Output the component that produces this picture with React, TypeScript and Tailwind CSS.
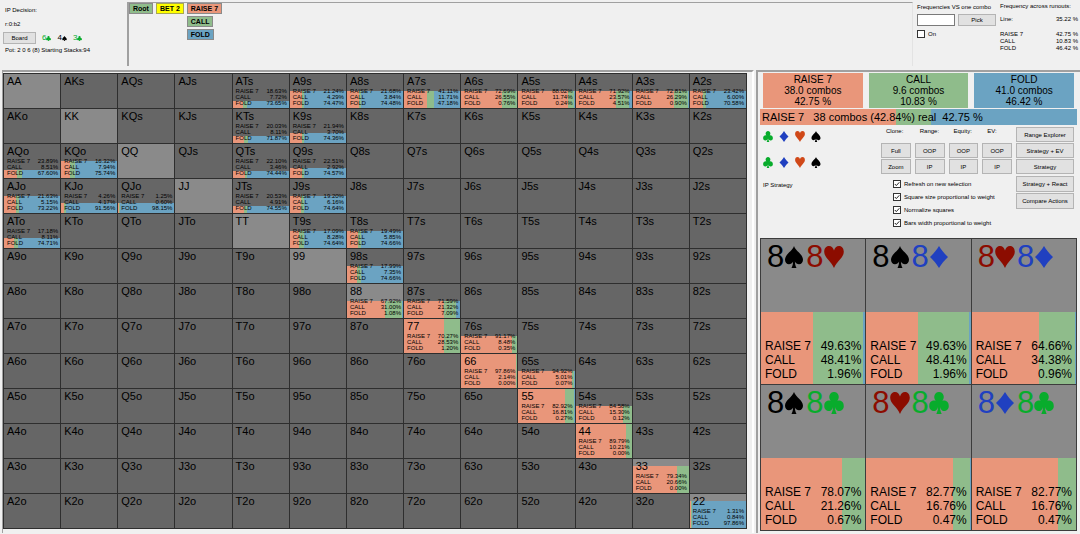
import clsx from 'clsx';

type Suit = 'club' | 'diamond' | 'heart' | 'spade';

type Freq = {
  raise: string;
  call: string;
  fold: string;
  weight: number;
};

const RANKS = ['A', 'K', 'Q', 'J', 'T', '9', '8', '7', '6', '5', '4', '3', '2'];

const HANDS: Record<string, Freq> = {
  ATs: { raise: '18.63', call: '7.72', fold: '73.65', weight: 20 },
  A9s: { raise: '21.24', call: '4.29', fold: '74.47', weight: 50 },
  A8s: { raise: '21.68', call: '3.84', fold: '74.48', weight: 50 },
  A7s: { raise: '41.11', call: '11.71', fold: '47.18', weight: 50 },
  A6s: { raise: '72.69', call: '26.55', fold: '0.76', weight: 50 },
  A5s: { raise: '88.02', call: '11.74', fold: '0.24', weight: 50 },
  A4s: { raise: '71.92', call: '23.57', fold: '4.51', weight: 50 },
  A3s: { raise: '72.81', call: '26.29', fold: '0.90', weight: 50 },
  A2s: { raise: '23.42', call: '6.00', fold: '70.58', weight: 50 },
  KTs: { raise: '20.03', call: '8.11', fold: '71.87', weight: 20 },
  K9s: { raise: '21.94', call: '3.70', fold: '74.36', weight: 30 },
  AQo: { raise: '23.89', call: '8.51', fold: '67.60', weight: 25 },
  KQo: { raise: '16.32', call: '7.94', fold: '75.74', weight: 50 },
  QTs: { raise: '22.10', call: '3.46', fold: '74.44', weight: 20 },
  Q9s: { raise: '22.51', call: '2.92', fold: '74.57', weight: 30 },
  AJo: { raise: '21.63', call: '5.15', fold: '73.22', weight: 50 },
  KJo: { raise: '4.26', call: '4.17', fold: '91.56', weight: 30 },
  QJo: { raise: '1.25', call: '0.60', fold: '98.15', weight: 30 },
  JTs: { raise: '20.53', call: '4.91', fold: '74.55', weight: 20 },
  J9s: { raise: '19.20', call: '6.16', fold: '74.64', weight: 50 },
  ATo: { raise: '17.18', call: '8.11', fold: '74.71', weight: 30 },
  T9s: { raise: '17.09', call: '8.28', fold: '74.64', weight: 50 },
  T8s: { raise: '19.49', call: '5.85', fold: '74.66', weight: 50 },
  '98s': { raise: '17.99', call: '7.35', fold: '74.66', weight: 50 },
  '88': { raise: '67.92', call: '31.00', fold: '1.08', weight: 50 },
  '87s': { raise: '71.59', call: '21.32', fold: '7.09', weight: 50 },
  '77': { raise: '70.27', call: '28.53', fold: '1.20', weight: 100 },
  '76s': { raise: '91.17', call: '8.48', fold: '0.35', weight: 50 },
  '66': { raise: '97.86', call: '2.14', fold: '0.00', weight: 100 },
  '65s': { raise: '94.92', call: '5.01', fold: '0.07', weight: 50 },
  '55': { raise: '82.92', call: '16.81', fold: '0.27', weight: 100 },
  '54s': { raise: '84.58', call: '15.30', fold: '0.12', weight: 50 },
  '44': { raise: '89.79', call: '10.21', fold: '0.00', weight: 100 },
  '33': { raise: '79.34', call: '20.66', fold: '0.00', weight: 80 },
  '22': { raise: '1.31', call: '0.84', fold: '97.86', weight: 80 },
};

const COMBOS: { cards: [Suit, Suit]; freq: Freq }[] = [
  { cards: ['spade', 'heart'], freq: { raise: '49.63', call: '48.41', fold: '1.96', weight: 50 } },
  { cards: ['spade', 'diamond'], freq: { raise: '49.63', call: '48.41', fold: '1.96', weight: 50 } },
  { cards: ['heart', 'diamond'], freq: { raise: '64.66', call: '34.38', fold: '0.96', weight: 50 } },
  { cards: ['spade', 'club'], freq: { raise: '78.07', call: '21.26', fold: '0.67', weight: 50 } },
  { cards: ['heart', 'club'], freq: { raise: '82.77', call: '16.76', fold: '0.47', weight: 50 } },
  { cards: ['diamond', 'club'], freq: { raise: '82.77', call: '16.76', fold: '0.47', weight: 50 } },
];

const SUMMARY = [
  { label: 'RAISE 7', combos: '38.0', pct: '42.75', color: 'bg-[#e9967a]' },
  { label: 'CALL', combos: '9.6', pct: '10.83', color: 'bg-[#8fbc8b]' },
  { label: 'FOLD', combos: '41.0', pct: '46.42', color: 'bg-[#6ba3c2]' },
];

const OPTIONS = [
  'Refresh on new selection',
  'Square size proportional to weight',
  'Normalize squares',
  'Bars width proportional to weight',
];

const SUITS: Suit[] = ['club', 'diamond', 'heart', 'spade'];

const CARD_COLORS: Record<Suit, string> = {
  club: 'text-[#08ac2c]',
  diamond: 'text-[#2040c0]',
  heart: 'text-[#8c0c00]',
  spade: 'text-black',
};

const SUIT_PATHS: Record<Suit, string> = {
  club: 'M10 0a4.600 4.600 0 0 1 3.300 7.900C16.600 7.200 19.700 9 19.700 12.200a4.400 4.400 0 0 1-8.700 1.500c.1 2.600.6 4.400 1.700 6.300H7.300c1.100-1.900 1.600-3.700 1.700-6.300A4.400 4.400 0 0 1 .3 12.200C.3 9 3.400 7.200 6.700 7.900A4.600 4.600 0 0 1 10 0z',
  diamond: 'M10 0C12.500 3.800 15.700 7.300 19 10 15.700 12.700 12.500 16.200 10 20 7.500 16.200 4.300 12.700 1 10 4.300 7.300 7.500 3.800 10 0z',
  heart: 'M10 4.200C10.700 1.500 12.500 0 15 0c3 0 4.800 2.300 4.800 5.300 0 5.200-6.600 8-9.800 14.700C6.800 13.300.2 10.500.2 5.300.2 2.300 2 0 5 0c2.500 0 4.300 1.500 5 4.200z',
  spade: 'M10 0c1.700 4.700 9 7.500 9 12.500 0 2.400-1.700 4.100-4 4.100-1.800 0-3.200-.9-4.100-2.500.1 2.300.6 4.100 1.600 5.900h-5c1-1.800 1.500-3.600 1.600-5.900C8.200 15.700 6.800 16.600 5 16.600c-2.300 0-4-1.700-4-4.100C1 7.500 8.300 4.700 10 0z',
};

function SuitIcon({ suit, className }: { suit: Suit; className?: string }) {
  return (
    <svg
      viewBox="0 0 20 20"
      preserveAspectRatio="none"
      fill="currentColor"
      className={className}
      aria-hidden="true"
    >
      <path d={SUIT_PATHS[suit]} />
    </svg>
  );
}

function handName(row: number, col: number) {
  if (row === col) return RANKS[row] + RANKS[row];
  return row < col ? `${RANKS[row]}${RANKS[col]}s` : `${RANKS[col]}${RANKS[row]}o`;
}

function StrategyFill({ freq }: { freq: Freq }) {
  return (
    <div className="absolute inset-x-0 bottom-0 flex bg-[#6ba3c2]" style={{ height: `${freq.weight}%` }}>
      <div className="bg-[#e9967a]" style={{ width: `${freq.raise}%` }} />
      <div className="bg-[#8fbc8b]" style={{ width: `${freq.call}%` }} />
    </div>
  );
}

function FreqLines({ freq }: { freq: Freq }) {
  return (
    <>
      <div className="flex justify-between whitespace-nowrap"><span>RAISE 7</span><span>{freq.raise}%</span></div>
      <div className="flex justify-between whitespace-nowrap"><span>CALL</span><span>{freq.call}%</span></div>
      <div className="flex justify-between whitespace-nowrap"><span>FOLD</span><span>{freq.fold}%</span></div>
    </>
  );
}

function HandCell({ row, col }: { row: number; col: number }) {
  const name = handName(row, col);
  const freq = HANDS[name];

  return (
    <div
      className={clsx(
        'relative h-[35px] border-r border-b border-[#2e2e2e]',
        row === col ? 'bg-[#8a8a8a]' : 'bg-[#666666]',
      )}
    >
      {freq && <StrategyFill freq={freq} />}
      <div className="relative flex h-full flex-col justify-between pt-px pr-0.5 pb-0.5 pl-[3px]">
        <div className="text-[11px] leading-[12px]">{name}</div>
        {freq && <div className="text-[6px] leading-[6px]"><FreqLines freq={freq} /></div>}
      </div>
    </div>
  );
}

function Button({ children, className }: { children: string; className?: string }) {
  return (
    <button
      type="button"
      className={clsx(
        'border border-[#b4b4b4] bg-[#e1e1e1] text-center leading-[8px] whitespace-nowrap hover:border-[#0078d7]',
        className,
      )}
    >
      {children}
    </button>
  );
}

function Checkbox({ label, checked }: { label: string; checked?: boolean }) {
  return (
    <label className="flex items-center gap-[3px]">
      <span className="relative flex">
        <input
          type="checkbox"
          defaultChecked={checked}
          className="peer size-2 appearance-none border border-[#333333] bg-white"
        />
        <svg
          viewBox="0 0 8 8"
          fill="none"
          stroke="#222222"
          className="pointer-events-none absolute inset-0 hidden size-2 peer-checked:block"
        >
          <path d="M1.800 4l1.500 1.600L6.300 2.300" />
        </svg>
      </span>
      {label}
    </label>
  );
}

function BoardCard({ rank, suit }: { rank: string; suit: Suit }) {
  return (
    <span className={clsx('flex items-center text-[8px] leading-[10px]', CARD_COLORS[suit])}>
      {rank}
      <SuitIcon suit={suit} className="size-[5px]" />
    </span>
  );
}

function Header() {
  return (
    <header className="flex h-[70px] pt-0.5">
      <section className="w-[127px] shrink-0 pt-1 pl-[5px] leading-[8px]">
        <p>IP Decision:</p>
        <p className="mt-[6px]">r:0:b2</p>
        <div className="mt-1 -ml-0.5 flex items-center gap-[6px]">
          <Button className="h-3 w-[33px]">Board</Button>
          <BoardCard rank="6" suit="club" />
          <BoardCard rank="4" suit="spade" />
          <BoardCard rank="3" suit="club" />
        </div>
        <p className="mt-0.5 whitespace-nowrap">Pot: 2 0 6 (8) Starting Stacks:94</p>
      </section>

      <nav className="mb-1 flex flex-1 items-start gap-[3px] border-t border-r border-l-2 border-t-[#a0a0a0] border-r-[#e3e3e3] border-l-[#a0a0a0] text-[7px] leading-[9px] font-bold">
        <button type="button" className="border border-[#8a8a8a] bg-[#8fbc8b] px-[3px]">Root</button>
        <button type="button" className="border border-[#a8a850] bg-[#ffff00] px-[3px]">BET 2</button>
        <div className="flex flex-col items-start gap-0.5">
          <button type="button" className="border border-[#8a8a8a] bg-[#e9967a] px-[3px]">RAISE 7</button>
          <button type="button" className="border border-[#8a8a8a] bg-[#8fbc8b] px-[3px]">CALL</button>
          <button type="button" className="border border-[#8a8a8a] bg-[#6ba3c2] px-[3px]">FOLD</button>
        </div>
      </nav>

      <section className="w-[83px] shrink-0 pt-px pl-1 leading-[8px] whitespace-nowrap">
        <label htmlFor="combo" className="block">Frequencies VS one combo</label>
        <div className="mt-[3px] mb-1 flex gap-[3px]">
          <input id="combo" type="text" className="h-3 w-[38px] border border-[#7a7a7a] bg-white px-0.5" />
          <Button className="h-3 w-[38px]">Pick</Button>
        </div>
        <Checkbox label="On" />
      </section>

      <section className="w-[84px] shrink-0 pr-0.5 pl-1 whitespace-nowrap">
        <table className="w-full leading-[7px]">
          <caption className="pb-[6px] text-left leading-[8px]">Frequency across runouts:</caption>
          <tbody>
            <tr>
              <td className="pb-2">Line:</td>
              <td className="pb-2 text-right">35.22 %</td>
            </tr>
            {SUMMARY.map((s) => (
              <tr key={s.label}>
                <td>{s.label}</td>
                <td className="text-right">{s.pct} %</td>
              </tr>
            ))}
          </tbody>
        </table>
      </section>
    </header>
  );
}

function Controls() {
  return (
    <div className="flex h-[113px] pt-0.5 pr-[3px]">
      <div className="flex-1 pl-[3px]">
        {[0, 1].map((row) => (
          <div key={row} className="flex gap-[6px] pt-1 pb-[11px]">
            {SUITS.map((suit) => (
              <SuitIcon
                key={suit}
                suit={suit}
                className={clsx('h-[11px] w-[10px]', suit === 'heart' ? 'text-[#d04818]' : CARD_COLORS[suit])}
              />
            ))}
          </div>
        ))}
        <p className="mt-0.5 leading-[8px]">IP Strategy</p>
      </div>

      <div className="w-[135px]">
        <div className="grid grid-cols-4 gap-x-1 pr-1 leading-[8px]">
          <span className="pl-[5px]">Clone:</span>
          <span className="pl-[5px]">Range:</span>
          <span className="pl-[5px]">Equity:</span>
          <span className="pl-[5px]">EV:</span>
        </div>
        <div className="mt-2 grid grid-cols-4 gap-x-1 gap-y-px pr-1">
          <Button className="h-[15px]">Full</Button>
          <Button className="h-[15px]">OOP</Button>
          <Button className="h-[15px]">OOP</Button>
          <Button className="h-[15px]">OOP</Button>
          <Button className="h-[15px]">Zoom</Button>
          <Button className="h-[15px]">IP</Button>
          <Button className="h-[15px]">IP</Button>
          <Button className="h-[15px]">IP</Button>
        </div>
        <div className="mt-[6px] flex flex-col gap-[5px] pl-3 leading-[8px] whitespace-nowrap">
          {OPTIONS.map((option) => (
            <Checkbox key={option} label={option} checked />
          ))}
        </div>
      </div>

      <div className="flex w-[58px] flex-col gap-px">
        <Button className="h-[15px]">Range Explorer</Button>
        <Button className="h-[15px]">Strategy + EV</Button>
        <Button className="h-[15px]">Strategy</Button>
        <Button className="mt-px h-4">Strategy + React</Button>
        <Button className="h-4">Compare Actions</Button>
      </div>
    </div>
  );
}

function ComboCard({ cards, freq }: { cards: [Suit, Suit]; freq: Freq }) {
  return (
    <div className="relative h-[146px] border-r border-b border-[#3c3c3c] bg-[#8a8a8a]">
      <StrategyFill freq={freq} />
      <div className="relative flex h-full flex-col justify-between pt-0.5 pr-1 pb-[3px] pl-1">
        <div className="flex gap-0.5 pl-0.5 text-[31px] leading-[32px]">
          {cards.map((suit) => (
            <span key={suit} className={clsx('flex items-center', CARD_COLORS[suit])}>
              8
              <SuitIcon suit={suit} className="h-[22px] w-5" />
            </span>
          ))}
        </div>
        <div className="text-[12px] leading-[14px]"><FreqLines freq={freq} /></div>
      </div>
    </div>
  );
}

export default function App() {
  return (
    <div className="min-h-screen bg-[#f0f0f0] font-['Liberation_Sans',Arial,sans-serif] text-[6px] text-black">
      <Header />
      <div className="flex">
        <main className="mr-0.5 ml-0.5 min-w-0 flex-1 border-t-2 border-r-2 border-l border-t-[#a0a0a0] border-r-white border-l-[#a0a0a0] pt-px pr-[5px] pb-1">
          <div className="grid grid-cols-13 border-t border-l border-[#2e2e2e]">
            {RANKS.map((_, row) =>
              RANKS.map((_, col) => <HandCell key={`${row}-${col}`} row={row} col={col} />),
            )}
          </div>
        </main>

        <aside className="w-[30%] shrink-0 border-t-2 border-l-2 border-[#a0a0a0] pt-px pr-[3px] pl-0.5">
          <div className="grid grid-cols-3 gap-[6px] px-[3px]">
            {SUMMARY.map((s) => (
              <div key={s.label} className={clsx('pt-px pb-px text-center text-[10px] leading-[11px]', s.color)}>
                <p>{s.label}</p>
                <p>{s.combos} combos</p>
                <p>{s.pct} %</p>
              </div>
            ))}
          </div>
          <div className="relative mt-px h-4 bg-[#6ba3c2]">
            <div className="flex h-full">
              <div className="w-[43%] bg-[#e9967a]" />
              <div className="w-[11%] bg-[#8fbc8b]" />
            </div>
            <p className="absolute inset-0 pl-0.5 text-[11px] leading-4 whitespace-pre">
              {'RAISE 7   38 combos (42.84%) real  42.75 %'}
            </p>
          </div>
          <Controls />
          <div className="grid grid-cols-3 border-t border-l border-[#3c3c3c]">
            {COMBOS.map((combo) => (
              <ComboCard key={combo.cards.join('-')} cards={combo.cards} freq={combo.freq} />
            ))}
          </div>
        </aside>
      </div>
    </div>
  );
}
